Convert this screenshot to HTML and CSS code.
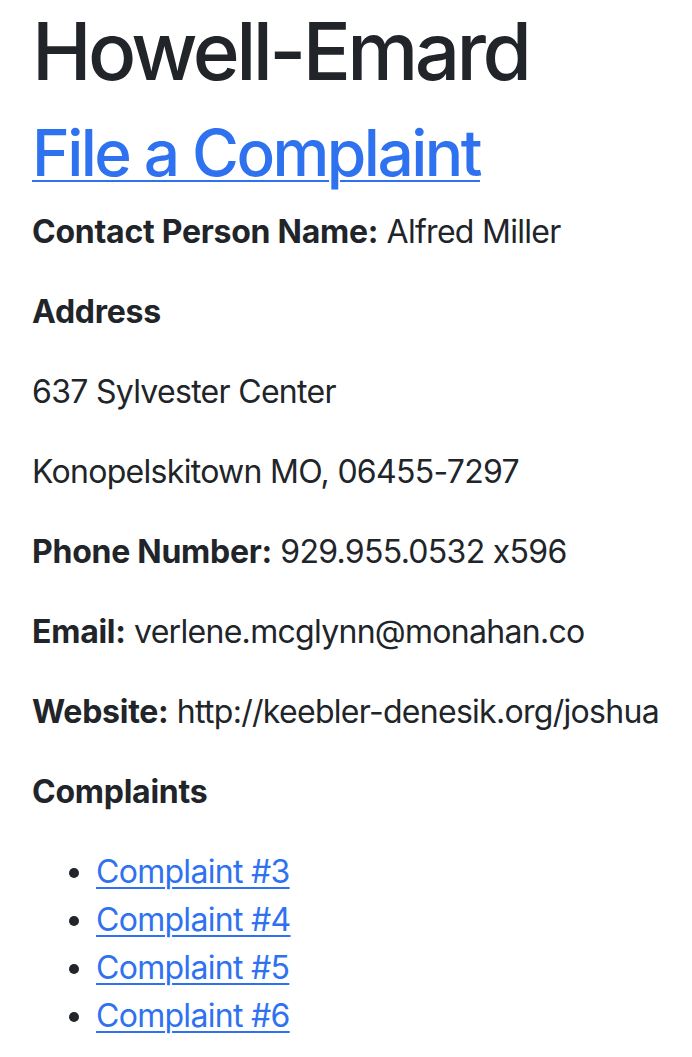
FILE: index.html
```html
<!DOCTYPE html>
<html lang="en">
<head>
<meta charset="utf-8">
<title>Howell-Emard</title>
<link rel="stylesheet" href="styles.css">
</head>
<body>
<main class="container">
  <h1 class="title">Howell-Emard</h1>
  <h2 class="subtitle"><a href="#">File a Complaint</a></h2>
  <p><strong>Contact Person Name:</strong> Alfred Miller</p>
  <p><strong>Address</strong></p>
  <p>637 Sylvester Center</p>
  <p>Konopelskitown MO, 06455-7297</p>
  <p><strong>Phone Number:</strong> 929.955.0532 x596</p>
  <p><strong>Email:</strong> verlene.mcglynn@monahan.co</p>
  <p class="nowrap"><strong>Website:</strong> http://keebler-denesik.org/joshua</p>
  <p><strong>Complaints</strong></p>
  <ul class="complaints">
    <li><a href="#">Complaint #3</a></li>
    <li><a href="#">Complaint #4</a></li>
    <li><a href="#">Complaint #5</a></li>
    <li><a href="#">Complaint #6</a></li>
  </ul>
</main>
</body>
</html>
```
FILE: styles.css
```css
html, body {
  margin: 0;
  padding: 0;
  background: #fff;
}
body {
  font-family: Inter, "Noto Sans", sans-serif;
  font-size: 32px;
  line-height: 1.5;
  color: #212529;
  font-feature-settings: "calt" 0;
  letter-spacing: -0.022em;
}
.container {
  padding: 3px 32px 0;
}
.title {
  font-size: 80px;
  font-weight: 500;
  line-height: 1.2;
  letter-spacing: -0.045em;
  margin: 0 0 16px;
}
.subtitle {
  font-size: 64px;
  font-weight: 500;
  line-height: 1.2;
  letter-spacing: -0.04em;
  margin: 0 0 16px;
}
p {
  margin: 0 0 32px;
}
.nowrap {
  white-space: nowrap;
}
strong {
  font-weight: 700;
  letter-spacing: -0.008em;
}
a {
  color: #2f72f0;
  text-decoration: underline;
  text-decoration-thickness: 2px;
  text-underline-offset: 4px;
}
.complaints {
  margin: 0 0 32px;
  padding-left: 64px;
}
```
